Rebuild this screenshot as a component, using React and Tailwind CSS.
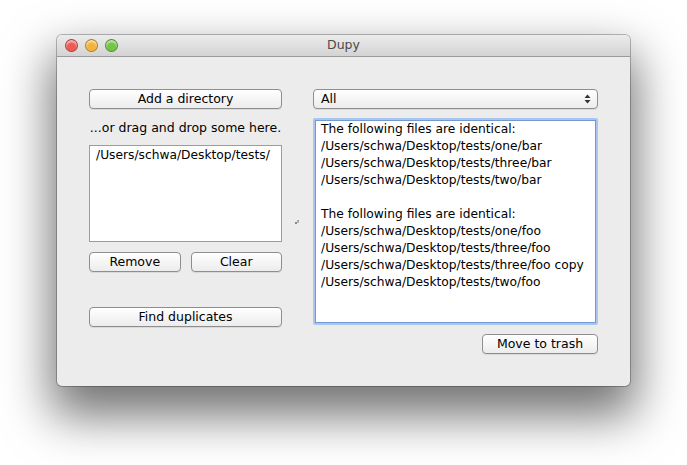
import React from "react";

const btnBase =
  "h-[20px] rounded-[4px] border border-[#8e8e8e] bg-gradient-to-b from-white to-[#ececec] shadow-[0_1px_0_rgba(0,0,0,0.08)] text-[12.5px] leading-[18px] text-black flex items-center";
const btn = `${btnBase} justify-center`;

function Light({ color }) {
  return (
    <div
      className={`w-[13px] h-[13px] rounded-full border border-black/30 ${color} shadow-[inset_0_2px_2px_rgba(255,255,255,0.6)]`}
    />
  );
}

export default function App() {
  return (
    <div className="w-[687px] h-[465px] bg-white pl-[57px] pt-[35px] font-['DejaVu_Sans',sans-serif]">
      <div className="w-[573px] h-[351px] rounded-[5px] bg-[#ececec] shadow-[0_24px_48px_6px_rgba(0,0,0,0.55),0_0_0_1px_rgba(0,0,0,0.25)] flex flex-col overflow-hidden">
        {/* title bar */}
        <div className="relative h-[22px] shrink-0 bg-gradient-to-b from-[#ececec] to-[#d3d3d3] border-b border-[#9b9b9b] flex items-center">
          <div className="flex gap-[7px] pl-[8px]">
            <Light color="bg-[#ee5b55]" />
            <Light color="bg-[#f2b43a]" />
            <Light color="bg-[#73c448]" />
          </div>
          <div className="absolute inset-0 flex items-center justify-center text-[12.5px] text-[#4a4a4a]">
            Dupy
          </div>
        </div>

        {/* body */}
        <div className="flex px-[32px] pt-[32px]">
          {/* left column */}
          <div className="w-[193px] flex flex-col">
            <div className={btn}>Add a directory</div>
            <div className="mt-[10px] h-[17px] text-[12.5px] leading-[17px] text-black text-center">
              ...or drag and drop some here.
            </div>
            <div className="mt-[9px] h-[97px] bg-white border border-[#9c9c9c] px-[6px] pt-[1px] text-[12.25px] leading-[17px] text-black">
              /Users/schwa/Desktop/tests/
            </div>
            <div className="mt-[10px] grid grid-cols-2 gap-[10px]">
              <div className={btn}>Remove</div>
              <div className={btn}>Clear</div>
            </div>
            <div className={`${btn} mt-[35px]`}>Find duplicates</div>
          </div>

          {/* splitter */}
          <div className="w-[31px] flex items-center justify-center">
            <svg width="5" height="4" viewBox="0 0 5 4">
              <rect x="0" y="2" width="2" height="2" fill="#8a8a8a" />
              <rect x="2" y="0" width="2" height="2" fill="#a8a8a8" />
              <rect x="2" y="2" width="2" height="1" fill="#b8b8b8" />
            </svg>
          </div>

          {/* right column */}
          <div className="w-[285px] flex flex-col">
            <div className={`${btnBase} justify-between pl-[7px] pr-[6px]`}>
              <span>All</span>
              <svg width="7" height="10" viewBox="0 0 7 10">
                <path d="M3.5 0.5 L6.5 4 L0.5 4 Z" fill="#333" />
                <path d="M3.5 9.5 L6.5 6 L0.5 6 Z" fill="#333" />
              </svg>
            </div>
            <div className="mt-[9px] h-[207px] rounded-[2px] bg-[#abc6ee] p-[2px]">
              <div className="h-full bg-white border border-[#7199d4] px-[5px] text-[12.25px] leading-[17px] text-black">
                <div>The following files are identical:</div>
                <div>/Users/schwa/Desktop/tests/one/bar</div>
                <div>/Users/schwa/Desktop/tests/three/bar</div>
                <div>/Users/schwa/Desktop/tests/two/bar</div>
                <div className="h-[17px]" />
                <div>The following files are identical:</div>
                <div>/Users/schwa/Desktop/tests/one/foo</div>
                <div>/Users/schwa/Desktop/tests/three/foo</div>
                <div>/Users/schwa/Desktop/tests/three/foo copy</div>
                <div>/Users/schwa/Desktop/tests/two/foo</div>
              </div>
            </div>
            <div className={`${btn} mt-[9px] w-[116px] self-end`}>Move to trash</div>
          </div>
        </div>
      </div>
    </div>
  );
}
